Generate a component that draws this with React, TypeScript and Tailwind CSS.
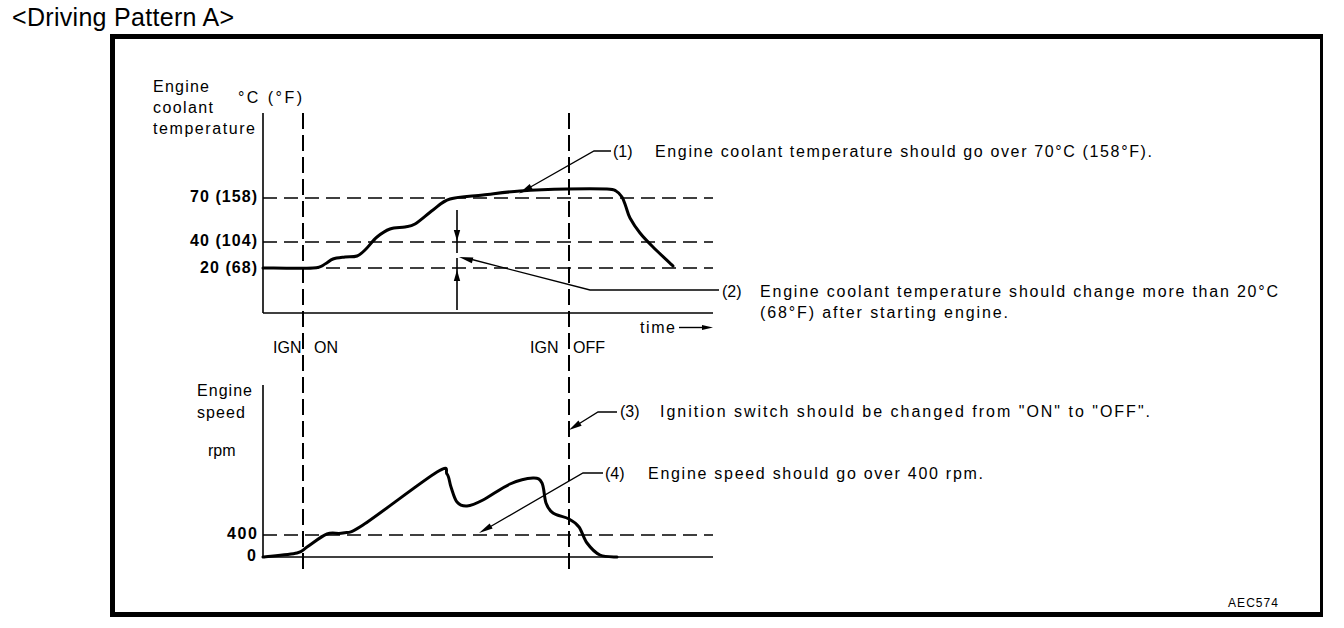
import React from "react"

type Pt = [number, number]

// smooth a list of points into a cubic path (catmull-rom)
const smooth = (pts: Pt[]) => {
  let d = `M${pts[0][0]},${pts[0][1]}`
  for (let i = 0; i < pts.length - 1; i++) {
    const p0 = pts[i - 1] || pts[i]
    const p1 = pts[i]
    const p2 = pts[i + 1]
    const p3 = pts[i + 2] || p2
    const c1x = p1[0] + (p2[0] - p0[0]) / 6
    const c1y = p1[1] + (p2[1] - p0[1]) / 6
    const c2x = p2[0] - (p3[0] - p1[0]) / 6
    const c2y = p2[1] - (p3[1] - p1[1]) / 6
    d += ` C${c1x.toFixed(1)},${c1y.toFixed(1)} ${c2x.toFixed(1)},${c2y.toFixed(1)} ${p2[0]},${p2[1]}`
  }
  return d
}

const tempCurve: Pt[] = [
  [263, 268], [313, 268], [325, 264], [333, 259], [345, 257], [357, 256], [366, 249],
  [377, 237], [390, 229], [405, 227], [415, 224], [433, 210], [450, 199], [483, 195],
  [520, 191], [567, 189], [607, 189], [616, 191], [622, 197], [626, 207], [630, 218],
  [640, 233], [653, 247], [673, 266],
]

const speedCurve: Pt[] = [
  [263, 557], [297, 553], [307, 547], [327, 534], [343, 533], [363, 525], [437, 472],
  [447, 474], [451, 487], [457, 502], [467, 506], [483, 500], [510, 484], [533, 478],
  [542, 483], [546, 503], [553, 513], [569, 519], [579, 527], [587, 543], [600, 555],
  [617, 557],
]

// small filled arrowhead, tip at (x,y), pointing along the direction from (fx,fy)
const Head = ({ x, y, fx, fy, len = 11, w = 3.2 }: { x: number; y: number; fx: number; fy: number; len?: number; w?: number }) => {
  const dx = x - fx
  const dy = y - fy
  const l = Math.hypot(dx, dy)
  const ux = dx / l
  const uy = dy / l
  const bx = x - ux * len
  const by = y - uy * len
  const p = `${x},${y} ${bx - uy * w},${by + ux * w} ${bx + uy * w},${by - ux * w}`
  return <polygon points={p} fill="black" />
}

const T = ({ x, y, len, children, size = 16, bold = false }: { x: number; y: number; len?: number; children: React.ReactNode; size?: number; bold?: boolean }) => (
  <text
    x={x}
    y={y}
    fontSize={size}
    fontWeight={bold ? 700 : 400}
    textLength={len}
    lengthAdjust={len ? "spacing" : undefined}
    fill="black"
  >
    {children}
  </text>
)

export default function App() {
  return (
    <div className="h-[628px] w-[1344px] overflow-hidden bg-white font-['Liberation_Sans',Arial,sans-serif] text-black">
      <div className="h-[34px] pl-[12px] text-[25px] leading-[34px] tracking-[0.3px]">&lt;Driving Pattern A&gt;</div>

      <div className="ml-[110px] h-[583px] w-[1213px] border-[5px] border-r-[3px] border-black">
        <svg width="1205" height="573" viewBox="115 39 1205 573" className="block">
          {/* ---- coolant temperature chart ---- */}
          <T x={153} y={92} len={56}>Engine</T>
          <T x={153} y={113} len={60}>coolant</T>
          <T x={153} y={134} len={102}>temperature</T>
          <T x={238} y={103} len={64}>°C (°F)</T>

          <T x={190} y={202} len={67} bold>70 (158)</T>
          <T x={190} y={246} len={67} bold>40 (104)</T>
          <T x={200} y={273} len={57} bold>20 (68)</T>

          <g stroke="black" strokeWidth={1.6} fill="none">
            <line x1={263} y1={113} x2={263} y2={313} />
            <line x1={263} y1={313} x2={713} y2={313} />
          </g>
          <g stroke="black" strokeWidth={1.5} strokeDasharray="14 7" fill="none">
            <line x1={263} y1={198} x2={713} y2={198} />
            <line x1={263} y1={242} x2={713} y2={242} />
            <line x1={263} y1={268} x2={713} y2={268} />
          </g>

          <path d={smooth(tempCurve)} stroke="black" strokeWidth={3} fill="none" strokeLinecap="round" />

          {/* dimension arrows */}
          <g stroke="black" strokeWidth={1.6}>
            <line x1={457} y1={210} x2={457} y2={253} />
            <line x1={457} y1={258} x2={457} y2={310} />
          </g>
          <Head x={457} y={241} fx={457} fy={210} />
          <Head x={457} y={270} fx={457} fy={300} />

          {/* IGN ON / OFF */}
          <g stroke="black" strokeWidth={2} strokeDasharray="16 6" fill="none">
            <line x1={303} y1={113} x2={303} y2={569} />
            <line x1={569} y1={113} x2={569} y2={569} />
          </g>
          <T x={273} y={353}>IGN</T>
          <T x={314} y={353}>ON</T>
          <T x={530} y={353}>IGN</T>
          <T x={573} y={353}>OFF</T>

          <T x={640} y={333} len={35}>time</T>
          <line x1={679} y1={327.5} x2={704} y2={327.5} stroke="black" strokeWidth={1.4} />
          <Head x={713} y={327.5} fx={690} fy={327.5} len={11} w={2.6} />

          {/* leader (1) */}
          <polyline points="611,151 594,151 527,189" stroke="black" strokeWidth={1.3} fill="none" />
          <Head x={519} y={193.5} fx={594} fy={151} len={14} w={3} />
          <T x={613} y={157}>(1)</T>
          <T x={655} y={157} len={497}>Engine coolant temperature should go over 70°C (158°F).</T>

          {/* leader (2) */}
          <polyline points="719,290 590,290 470,259" stroke="black" strokeWidth={1.3} fill="none" />
          <Head x={459} y={257} fx={590} fy={290} len={14} w={3} />
          <T x={722} y={297}>(2)</T>
          <T x={760} y={297} len={518}>Engine coolant temperature should change more than 20°C</T>
          <T x={760} y={318} len={248}>(68°F) after starting engine.</T>

          {/* ---- engine speed chart ---- */}
          <T x={197} y={396} len={55}>Engine</T>
          <T x={197} y={418} len={48}>speed</T>
          <T x={208} y={456}>rpm</T>
          <T x={227} y={539} len={30} bold>400</T>
          <T x={247} y={561} bold>0</T>

          <g stroke="black" strokeWidth={1.6} fill="none">
            <line x1={263} y1={385} x2={263} y2={557} />
            <line x1={263} y1={557} x2={713} y2={557} />
          </g>
          <line x1={263} y1={535} x2={713} y2={535} stroke="black" strokeWidth={1.5} strokeDasharray="14 7" />

          <path d={smooth(speedCurve)} stroke="black" strokeWidth={3} fill="none" strokeLinecap="round" />

          {/* leader (3) */}
          <polyline points="617,412 598,412 577,425" stroke="black" strokeWidth={1.3} fill="none" />
          <Head x={569} y={430} fx={598} fy={412} len={13} w={3} />
          <T x={620} y={417}>(3)</T>
          <T x={660} y={417} len={490}>Ignition switch should be changed from "ON" to "OFF".</T>

          {/* leader (4) */}
          <polyline points="603,473 583,473 488,528" stroke="black" strokeWidth={1.3} fill="none" />
          <Head x={479} y={533} fx={583} fy={473} len={14} w={3} />
          <T x={605} y={479}>(4)</T>
          <T x={648} y={479} len={335}>Engine speed should go over 400 rpm.</T>

          <T x={1228} y={607} len={50} size={12}>AEC574</T>
        </svg>
      </div>
    </div>
  )
}
